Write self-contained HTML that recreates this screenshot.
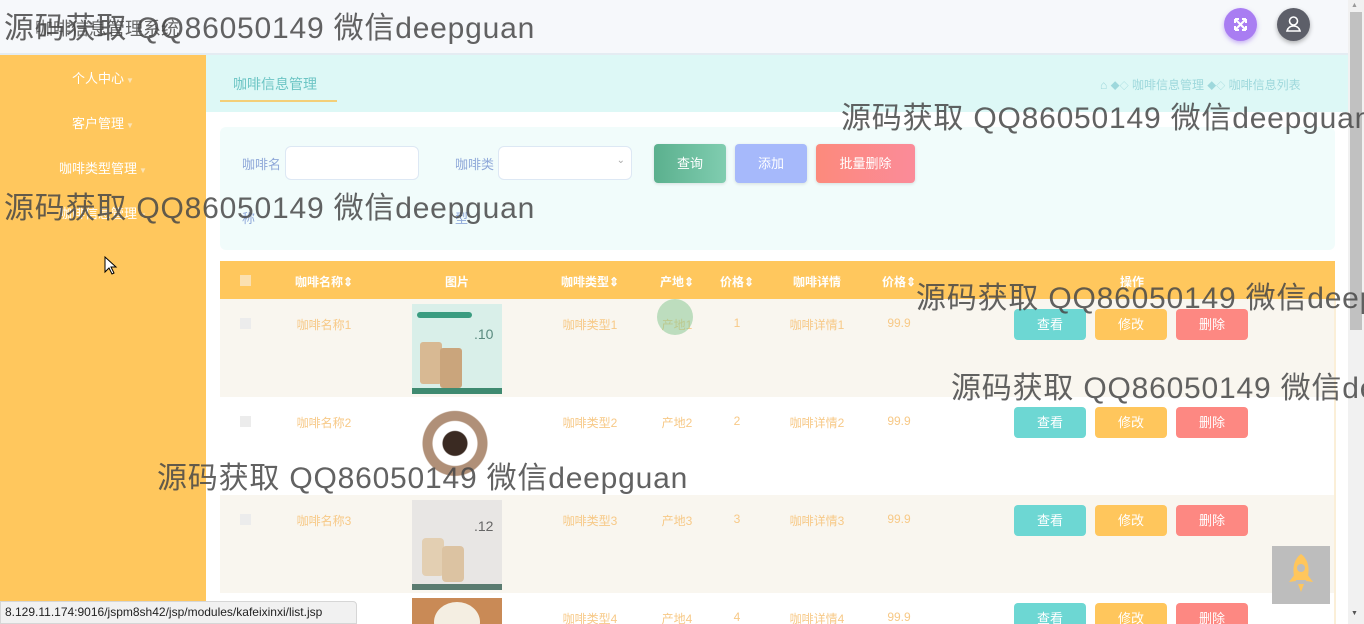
<!DOCTYPE html>
<html><head><meta charset="utf-8"><style>
*{margin:0;padding:0;box-sizing:border-box}
html,body{width:1364px;height:624px;overflow:hidden}
body{position:relative;background:#fff;font-family:"Liberation Sans","Noto Sans CJK SC",sans-serif;font-size:13px}
.abs{position:absolute}
.hdr{left:0;top:0;width:1348px;height:55px;background:#f6f8fb;border-bottom:2px solid #e4ecf2}
.side{left:0;top:55px;width:206px;height:569px;background:#ffc75d}
.side div{position:absolute;left:0;width:206px;text-align:center;color:#fff;font-size:13px}
.side span{font-size:8px;color:#fbe3b4;margin-left:2px}
.topbar{left:206px;top:55px;width:1142px;height:57px;background:#ddf8f6}
.search{left:220px;top:127px;width:1115px;height:123px;background:#f1fcfb;border-radius:6px}
.lbl{color:#8fa8d9;font-size:13px}
.inp{background:#fff;border:1px solid #dde8f4;border-radius:6px;height:34px}
.btn{color:#fff;border-radius:4px;text-align:center;font-size:13px;box-shadow:0 1px 3px rgba(0,0,0,.12)}
.th{left:220px;top:261px;width:1115px;height:38px;background:#ffc75d}
.th span{position:absolute;top:12px;color:#fff;font-weight:bold;font-size:12px;transform:translateX(-50%);white-space:nowrap}
.row{left:220px;width:1115px;height:98px}
.cell{position:absolute;color:#f7c987;font-size:12px;transform:translateX(-50%);white-space:nowrap}
.cb{position:absolute;left:20px;width:11px;height:11px;background:#ececec}
.ab{position:absolute;width:72px;height:31px;border-radius:4px;color:#fff;text-align:center;line-height:31px;font-size:13px}
.wm{position:absolute;color:rgba(70,70,70,.85);font-size:30px;letter-spacing:0.8px;white-space:nowrap;font-family:"Liberation Sans","Noto Sans CJK SC",sans-serif}
</style></head><body>
<div class="abs hdr"></div>
<div class="abs" style="left:35px;top:15px;color:#666;font-size:18px">咖啡信息管理系统</div>
<div class="abs" style="left:1224px;top:8px;width:33px;height:33px;border-radius:50%;background:#a97df2;box-shadow:0 2px 5px rgba(150,100,240,.5)"><svg width="33" height="33" viewBox="0 0 33 33"><path d="M11 11l11 11M22 11l-11 11M11 11h4M11 11v4M22 11h-4M22 11v4M11 22h4M11 22v-4M22 22h-4M22 22v-4" stroke="#fff" stroke-width="2" fill="none"/></svg></div>
<div class="abs" style="left:1277px;top:8px;width:33px;height:33px;border-radius:50%;background:#5d5f69;box-shadow:0 2px 5px rgba(0,0,0,.3)"><svg width="33" height="33" viewBox="0 0 33 33"><circle cx="16.5" cy="13" r="4" stroke="#fff" stroke-width="1.6" fill="none"/><path d="M10 23c1-4 4-5 6.5-5s5.5 1 6.5 5z" stroke="#fff" stroke-width="1.6" fill="none"/></svg></div>

<div class="abs side">
<div style="top:13px">个人中心<span>▼</span></div>
<div style="top:58px">客户管理<span>▼</span></div>
<div style="top:103px">咖啡类型管理<span>▼</span></div>
<div style="top:148px">咖啡信息管理<span>▼</span></div>
</div>
<svg class="abs" style="left:104px;top:256px" width="14" height="20"><path d="M1 1v15l4-4 3 6 2-1-3-6h5z" fill="#fff" stroke="#000"/></svg>

<div class="abs topbar"></div>
<div class="abs" style="left:233px;top:74px;color:#6cc5c4;font-size:14px">咖啡信息管理</div>
<div class="abs" style="left:220px;top:100px;width:117px;height:2px;background:#f3cf78"></div>
<div class="abs" style="left:1100px;top:76px;color:#9ed8dc;font-size:12px">⌂ <span style="font-size:9px">◆◇</span> 咖啡信息管理 <span style="font-size:9px">◆◇</span> 咖啡信息列表</div>

<div class="abs search"></div>
<div class="abs lbl" style="left:242px;top:154px">咖啡名</div>
<div class="abs lbl" style="left:242px;top:208px">称</div>
<div class="abs inp" style="left:285px;top:146px;width:134px"></div>
<div class="abs lbl" style="left:455px;top:154px">咖啡类</div>
<div class="abs lbl" style="left:455px;top:208px">型</div>
<div class="abs inp" style="left:498px;top:146px;width:134px"><span style="position:absolute;right:6px;top:8px;color:#aaa;font-size:10px">⌄</span></div>
<div class="abs btn" style="left:654px;top:144px;width:72px;height:39px;line-height:39px;background:linear-gradient(90deg,#5bb08e,#80cdb0)">查询</div>
<div class="abs btn" style="left:735px;top:144px;width:72px;height:39px;line-height:39px;background:#a6b9fb">添加</div>
<div class="abs btn" style="left:816px;top:144px;width:99px;height:39px;line-height:39px;background:linear-gradient(90deg,#fc8a7c,#fb8b99)">批量删除</div>

<div class="abs th">
<div style="position:absolute;left:20px;top:14px;width:11px;height:11px;background:#fbe0b0"></div>
<span style="left:104px">咖啡名称⇕</span><span style="left:237px">图片</span><span style="left:370px">咖啡类型⇕</span><span style="left:457px">产地⇕</span><span style="left:517px">价格⇕</span><span style="left:597px">咖啡详情</span><span style="left:679px">价格⇕</span><span style="left:912px">操作</span>
</div>

<div class="abs row" style="top:299px;background:#f9f6ef"></div>
<div class="abs row" style="top:397px;background:#fff"></div>
<div class="abs row" style="top:495px;background:#f9f6ef"></div>
<div class="abs row" style="top:593px;background:#fff;height:31px"></div>
<div class="abs" style="left:1334px;top:299px;width:2px;height:325px;background:#fbefd8"></div>

<div class="abs" style="left:220px;top:299px;width:1115px;height:325px;overflow:hidden">
<div class="cb" style="top:19px"></div><div class="cb" style="top:117px"></div><div class="cb" style="top:215px"></div>
<div class="cell" style="left:104px;top:17px">咖啡名称1</div><div class="cell" style="left:104px;top:115px">咖啡名称2</div><div class="cell" style="left:104px;top:213px">咖啡名称3</div>
<div class="cell" style="left:370px;top:17px">咖啡类型1</div><div class="cell" style="left:370px;top:115px">咖啡类型2</div><div class="cell" style="left:370px;top:213px">咖啡类型3</div><div class="cell" style="left:370px;top:311px">咖啡类型4</div>
<div class="cell" style="left:457px;top:17px">产地1</div><div class="cell" style="left:457px;top:115px">产地2</div><div class="cell" style="left:457px;top:213px">产地3</div><div class="cell" style="left:457px;top:311px">产地4</div>
<div class="cell" style="left:517px;top:17px">1</div><div class="cell" style="left:517px;top:115px">2</div><div class="cell" style="left:517px;top:213px">3</div><div class="cell" style="left:517px;top:311px">4</div>
<div class="cell" style="left:597px;top:17px">咖啡详情1</div><div class="cell" style="left:597px;top:115px">咖啡详情2</div><div class="cell" style="left:597px;top:213px">咖啡详情3</div><div class="cell" style="left:597px;top:311px">咖啡详情4</div>
<div class="cell" style="left:679px;top:17px">99.9</div><div class="cell" style="left:679px;top:115px">99.9</div><div class="cell" style="left:679px;top:213px">99.9</div><div class="cell" style="left:679px;top:311px">99.9</div>
<div style="position:absolute;left:437px;top:0px;width:36px;height:36px;border-radius:50%;background:rgba(140,200,150,.55)"></div>
<div style="position:absolute;left:192px;top:5px;width:90px;height:90px;background:#d9efe9">
<div style="position:absolute;left:5px;top:8px;width:55px;height:6px;background:#3a9c80;border-radius:3px"></div>
<div style="position:absolute;left:62px;top:22px;color:#5a8a7f;font-size:14px">.10</div>
<div style="position:absolute;left:8px;top:38px;width:22px;height:42px;background:#d8b993;border-radius:3px"></div>
<div style="position:absolute;left:28px;top:44px;width:22px;height:40px;background:#caa57c;border-radius:3px"></div>
<div style="position:absolute;left:0;top:84px;width:90px;height:6px;background:#3f8a70"></div></div>
<div style="position:absolute;left:200px;top:103px;width:70px;height:92px;border-radius:50%;background:radial-gradient(circle at 50% 45%,#3a2a22 0 12px,#fff 13px 22px,#b09078 23px 32px,transparent 33px)"></div>
<div style="position:absolute;left:192px;top:201px;width:90px;height:90px;background:#e8e6e4">
<div style="position:absolute;left:62px;top:18px;color:#666;font-size:14px">.12</div>
<div style="position:absolute;left:10px;top:38px;width:22px;height:38px;background:#e3cfb2;border-radius:4px"></div>
<div style="position:absolute;left:30px;top:46px;width:22px;height:36px;background:#dcc3a2;border-radius:4px"></div>
<div style="position:absolute;left:0;top:84px;width:90px;height:6px;background:#5a7b70"></div></div>
<div style="position:absolute;left:192px;top:299px;width:90px;height:26px;background:#c98a56;overflow:hidden"><div style="position:absolute;left:22px;top:4px;width:46px;height:40px;border-radius:50%;background:#f4eee2"></div></div>
<div class="ab" style="left:794px;top:10px;background:#6dd7d3">查看</div><div class="ab" style="left:875px;top:10px;background:#ffc65c">修改</div><div class="ab" style="left:956px;top:10px;background:#fd8882">删除</div>
<div class="ab" style="left:794px;top:108px;background:#6dd7d3">查看</div><div class="ab" style="left:875px;top:108px;background:#ffc65c">修改</div><div class="ab" style="left:956px;top:108px;background:#fd8882">删除</div>
<div class="ab" style="left:794px;top:206px;background:#6dd7d3">查看</div><div class="ab" style="left:875px;top:206px;background:#ffc65c">修改</div><div class="ab" style="left:956px;top:206px;background:#fd8882">删除</div>
<div class="ab" style="left:794px;top:304px;background:#6dd7d3">查看</div><div class="ab" style="left:875px;top:304px;background:#ffc65c">修改</div><div class="ab" style="left:956px;top:304px;background:#fd8882">删除</div>
</div>

<div class="abs" style="left:1272px;top:546px;width:58px;height:58px;background:#bdbdbd">
<svg width="58" height="58"><path d="M29 8c8 6 9 16 6 26h-12c-3-10-2-20 6-26z" fill="#ffc65c"/><circle cx="29" cy="22" r="4" fill="#bdbdbd"/><path d="M23 28l-6 8 7-1zM35 28l6 8-7-1z" fill="#ffc65c"/><path d="M26 38h6l-3 8z" fill="#ffc65c"/></svg></div>

<div class="abs" style="left:1348px;top:0;width:16px;height:624px;background:#f1f1f1"></div>
<div class="abs" style="left:1350px;top:12px;width:12px;height:318px;background:#c1c1c1"></div>
<div class="abs" style="left:1351px;top:2px;color:#999;font-size:7px">▲</div>
<div class="abs" style="left:1351px;top:610px;color:#555;font-size:7px">▼</div>

<div class="abs" style="left:0;top:601px;width:357px;height:23px;background:#f1f1f1;border:1px solid #d6d6d6;border-radius:0 4px 0 0;font-size:12px;color:#222;padding:3px 0 0 4px;white-space:nowrap">8.129.11.174:9016/jspm8sh42/jsp/modules/kafeixinxi/list.jsp</div>

<div class="wm" style="left:4px;top:3px">源码获取 QQ86050149 微信deepguan</div>
<div class="wm" style="left:4px;top:183px">源码获取 QQ86050149 微信deepguan</div>
<div class="wm" style="left:841px;top:93px">源码获取 QQ86050149 微信deepguan</div>
<div class="wm" style="left:916px;top:273px">源码获取 QQ86050149 微信deepguan</div>
<div class="wm" style="left:951px;top:363px">源码获取 QQ86050149 微信deepguan</div>
<div class="wm" style="left:157px;top:453px">源码获取 QQ86050149 微信deepguan</div>
</body></html>
